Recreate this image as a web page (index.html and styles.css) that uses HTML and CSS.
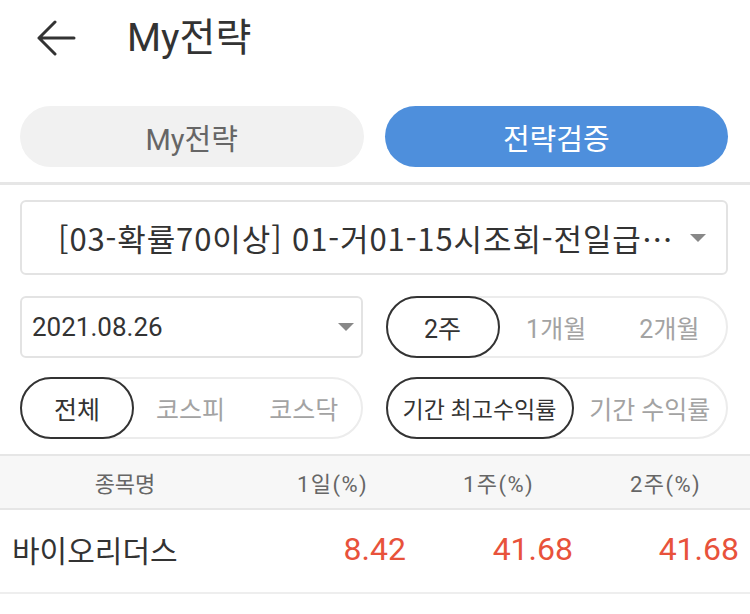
FILE: index.html
```html
<!DOCTYPE html>
<html lang="ko">
<head>
<meta charset="utf-8">
<link rel="stylesheet" href="styles.css">
</head>
<body>
<div class="app">
  <header class="topbar">
    <svg class="back" width="40" height="36" viewBox="0 0 40 36" aria-hidden="true">
      <path d="M38 18H3M19 2L3 18l16 16" fill="none" stroke="#333" stroke-width="3" stroke-linecap="round" stroke-linejoin="round"/>
    </svg>
    <h1 class="title">My전략</h1>
  </header>

  <nav class="tabs">
    <div class="tab">My전략</div>
    <div class="tab active">전략검증</div>
  </nav>

  <div class="divider"></div>

  <section class="filters">
    <div class="select wide">
      <span class="select-text">[03-확률70이상] 01-거01-15시조회-전일급…</span>
      <span class="caret"></span>
    </div>

    <div class="row">
      <div class="select date">
        <span class="date-text">2021.08.26</span>
        <span class="caret"></span>
      </div>
      <div class="seg">
        <span class="seg-item on">2주</span>
        <span class="seg-item">1개월</span>
        <span class="seg-item">2개월</span>
      </div>
    </div>

    <div class="row">
      <div class="seg">
        <span class="seg-item on">전체</span>
        <span class="seg-item">코스피</span>
        <span class="seg-item">코스닥</span>
      </div>
      <div class="seg">
        <span class="seg-item on long">기간 최고수익률</span>
        <span class="seg-item">기간 수익률</span>
      </div>
    </div>
  </section>

  <div class="table">
    <div class="thead">
      <span class="c-name">종목명</span>
      <span class="c-num c1">1일(%)</span>
      <span class="c-num c2">1주(%)</span>
      <span class="c-num c3">2주(%)</span>
    </div>
    <div class="trow">
      <span class="c-name">바이오리더스</span>
      <span class="c-num c1 up">8.42</span>
      <span class="c-num c2 up">41.68</span>
      <span class="c-num c3 up">41.68</span>
    </div>
  </div>
</div>
</body>
</html>
```

FILE: styles.css
```css
* { box-sizing: border-box; }
html, body { margin: 0; padding: 0; background: #fff; }
body {
  font-family: Roboto, "Noto Sans CJK KR", sans-serif;
  color: #333;
  width: 750px;
  height: 614px;
  overflow: hidden;
}
.app { display: flex; flex-direction: column; }

.topbar {
  height: 76px;
  display: flex;
  align-items: center;
  padding-left: 36px;
}
.back { flex: none; }
.title {
  margin: 0 0 0 51px;
  font-size: 39px;
  font-weight: 400;
  color: #333;
  line-height: 1;
}

.tabs {
  display: grid;
  grid-template-columns: 1fr 1fr;
  gap: 21px;
  padding: 30px 22px 0 20px;
}
.tab {
  height: 61px;
  border-radius: 31px;
  background: #f1f1f1;
  color: #666;
  font-size: 29px;
  display: flex;
  align-items: center;
  justify-content: center;
}
.tab.active { background: #4e8fdc; color: #fff; }

.divider {
  margin-top: 15px;
  height: 3px;
  background: #e6e6e6;
}

.filters {
  padding: 15px 22px 0 20px;
  display: flex;
  flex-direction: column;
  gap: 19px;
}
.row {
  display: grid;
  grid-template-columns: 1fr 1fr;
  gap: 23px;
}

.select {
  border: 2px solid #e3e3e3;
  border-radius: 6px;
  display: flex;
  align-items: center;
}
.select.wide {
  height: 75px;
  padding: 0 20px 0 36px;
  margin-bottom: 2px;
}
.select-text {
  flex: 1;
  font-family: "Noto Sans CJK KR", sans-serif;
  font-size: 31px;
  letter-spacing: 0.9px;
  color: #333;
  white-space: nowrap;
  overflow: hidden;
}
.caret {
  flex: none;
  width: 0; height: 0;
  border-left: 8px solid transparent;
  border-right: 8px solid transparent;
  border-top: 8px solid #888;
}
.select.date {
  height: 62px;
  padding: 0 7px 0 10px;
}
.date-text { flex: 1; font-size: 26px; color: #333; }

.seg {
  height: 62px;
  border: 2px solid #ececec;
  border-radius: 31px;
  display: flex;
  align-items: stretch;
}
.seg-item {
  flex: 1;
  display: flex;
  align-items: center;
  justify-content: center;
  font-size: 25px;
  color: #a3a3a3;
  white-space: nowrap;
  margin: -2px 0;
}
.seg-item.on {
  flex: none;
  width: 114px;
  border: 2px solid #333;
  border-radius: 31px;
  color: #333;
  margin-left: -2px;
}
.seg-item.on.long { width: 188px; font-size: 23px; }

.table { margin-top: 15px; }
.thead, .trow {
  display: flex;
  align-items: center;
}
.thead {
  height: 56px;
  background: #f7f7f7;
  border-top: 2px solid #e6e6e6;
  border-bottom: 2px solid #e6e6e6;
  color: #666;
  font-size: 22px;
}
.thead .c-num { letter-spacing: 1.4px; }
.trow {
  height: 84px;
  border-bottom: 2px solid #eee;
  font-size: 30px;
  color: #333;
  padding-bottom: 4px;
}
.thead .c-name { width: 250px; text-align: center; }
.trow .c-name { width: 250px; padding-left: 12px; }
.c-num { text-align: right; }
.thead .c1 { width: 118px; }
.thead .c2 { width: 166px; }
.thead .c3 { width: 167px; }
.trow .c1 { width: 156px; }
.trow .c2 { width: 167px; }
.trow .c3 { width: 166px; }
.trow .c-num { font-size: 32px; }
.up { color: #e8523b; }
```
